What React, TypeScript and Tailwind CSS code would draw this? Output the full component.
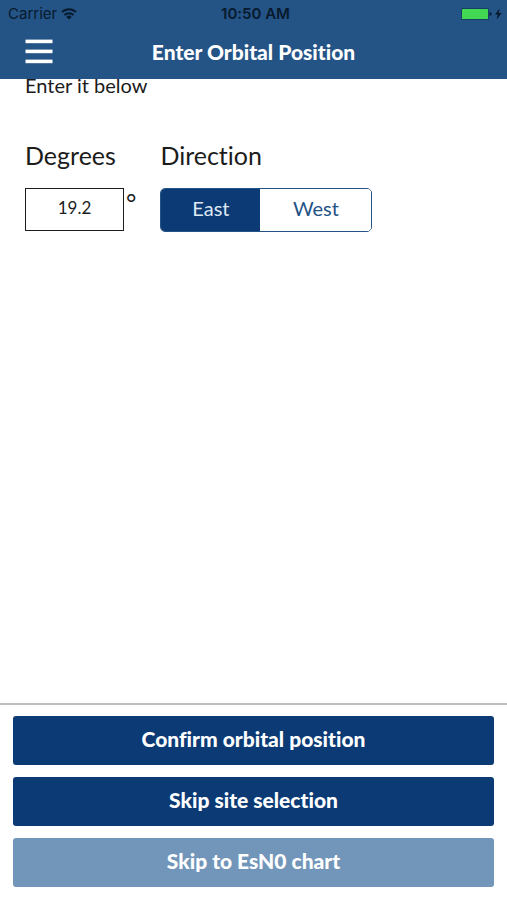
import React, { useState } from 'react';
import clsx from 'clsx';

type Direction = 'East' | 'West';

const ACTIONS: { id: string; label: string; muted?: boolean }[] = [
  { id: 'confirm', label: 'Confirm orbital position' },
  { id: 'skip-site', label: 'Skip site selection' },
  { id: 'skip-chart', label: 'Skip to EsN0 chart', muted: true },
];

function WifiIcon() {
  return (
    <svg width="16" height="12" viewBox="0 0 16 12" fill="none" stroke="#071a2e" aria-hidden="true">
      <path d="M1 4.1a10 10 0 0 1 14 0" strokeWidth="2" />
      <path d="M3.5 7a6.4 6.4 0 0 1 9 0" strokeWidth="2" />
      <path d="M8 11.6 5.3 8.9a3.8 3.8 0 0 1 5.4 0Z" fill="#071a2e" stroke="none" />
    </svg>
  );
}

function BatteryIcon() {
  return (
    <svg width="42" height="14" viewBox="0 0 42 14" aria-hidden="true">
      <rect x="0" y="1" width="28" height="12" rx="1.5" fill="#163f63" />
      <rect x="1" y="2" width="26" height="10" rx="0.5" fill="#43d854" />
      <path d="M28.6 5q2 .4 2 2t-2 2Z" fill="#071a2e" />
      <path d="M38.6 1.6 34 7.6h2.7l-1.2 4.8 5.3-6.4h-3.1Z" fill="#071a2e" />
    </svg>
  );
}

function StatusBar() {
  return (
    <div className="grid grid-cols-3 items-center h-7 pl-2 pr-1 text-[#071a2e] font-['Inter',sans-serif] text-[15px]">
      <div className="flex items-center gap-1">
        <span>Carrier</span>
        <WifiIcon />
      </div>
      <span className="text-center font-semibold">10:50 AM</span>
      <div className="flex justify-end">
        <BatteryIcon />
      </div>
    </div>
  );
}

export default function App() {
  const [degrees, setDegrees] = useState('19.2');
  const [direction, setDirection] = useState<Direction>('East');

  return (
    <div className="flex flex-col h-dvh bg-white text-[#1c1c1c] font-['Lato',sans-serif] [font-variant-ligatures:none]">
      <header className="shrink-0 bg-[#245386]">
        <StatusBar />
        <div className="grid grid-cols-[28px_1fr_28px] items-center h-[51px] px-[25px] pb-1">
          <button aria-label="Menu">
            <svg width="28" height="26" viewBox="0 0 28 26" fill="#fff" aria-hidden="true">
              <rect x="0.5" y="0.6" width="27" height="3.6" />
              <rect x="0.5" y="10.6" width="27" height="3.6" />
              <rect x="0.5" y="20.6" width="27" height="3.6" />
            </svg>
          </button>
          <h1 className="text-center text-white text-[21px] font-black">Enter Orbital Position</h1>
        </div>
      </header>

      {/* Form, scrolled slightly under the header */}
      <main className="flex-1 min-h-0 overflow-hidden px-[25px]">
        <p className="-mt-2 text-xl">Enter it below</p>

        <div className="flex gap-6 mt-10">
          <div>
            <label htmlFor="degrees" className="block text-[25px] leading-8">Degrees</label>
            <div className="flex gap-0.5 mt-[17px]">
              <input
                id="degrees"
                value={degrees}
                onChange={(e) => setDegrees(e.target.value)}
                className="w-[99px] h-[43px] pb-1 border border-[#1c1c1c] text-center text-[17px]"
              />
              <span className="text-[25px] leading-7">°</span>
            </div>
          </div>

          <div>
            <h2 id="direction" className="text-[25px] leading-8">Direction</h2>
            <div
              role="group"
              aria-labelledby="direction"
              className="flex w-[212px] h-11 mt-[17px] border border-[#245386] rounded-[5px] overflow-hidden text-xl"
            >
              {(['East', 'West'] as Direction[]).map((d) => (
                <button
                  key={d}
                  aria-pressed={direction === d}
                  onClick={() => setDirection(d)}
                  className={clsx(
                    'pb-1',
                    d === 'East' ? 'w-[99px]' : 'flex-1',
                    direction === d ? 'bg-[#0b3a75] text-[#dfe8f3]' : 'bg-white text-[#245386]'
                  )}
                >
                  {d}
                </button>
              ))}
            </div>
          </div>
        </div>
      </main>

      <footer className="shrink-0 flex flex-col gap-3 px-[13px] pt-[11px] pb-[13px] border-t-2 border-[#bfbfbf]">
        {ACTIONS.map(({ id, label, muted }) => (
          <button
            key={id}
            className={clsx(
              'h-[49px] pb-1 rounded-[3px] text-white text-[21px] font-black',
              muted ? 'bg-[#7296b9]' : 'bg-[#0b3a75]'
            )}
          >
            {label}
          </button>
        ))}
      </footer>
    </div>
  );
}
